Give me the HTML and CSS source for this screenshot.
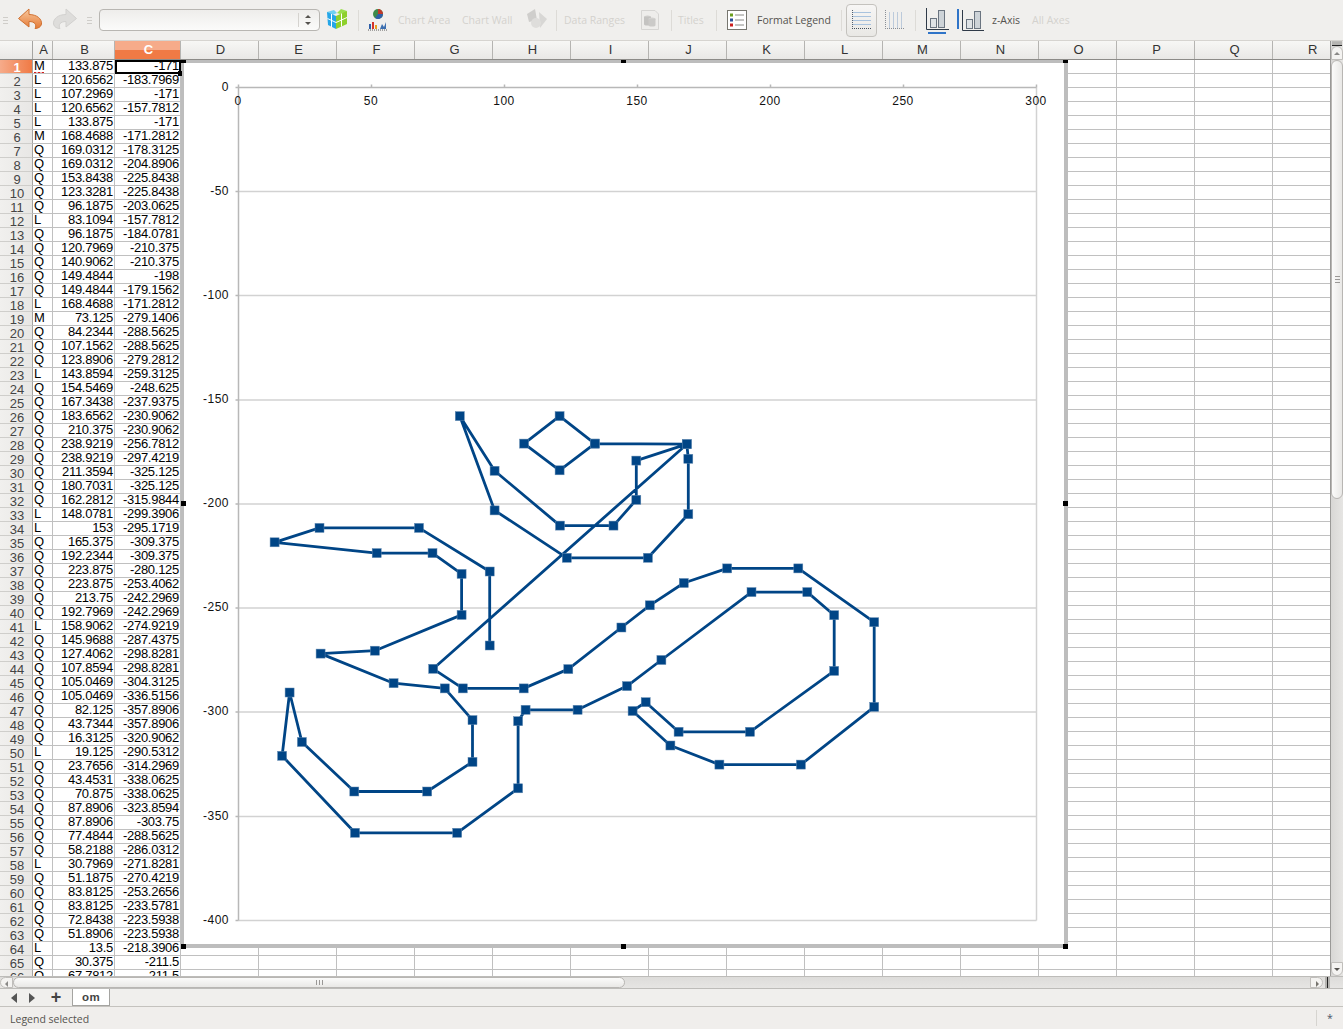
FILE: index.html
```html
<!DOCTYPE html>
<html>
<head>
    <title>om - Calc</title>
    <link rel="stylesheet" href="styles.css">
</head>
<body>
    <div class="toolbar">
        <span class="grip grip-first"></span>
        <svg class="tool-icon undo" width="26" height="24" viewBox="0 0 26 24">
            <defs>
                <linearGradient id="undo-fill" x1="0" y1="0" x2="0" y2="1">
                    <stop offset="0" stop-color="#f8c9a0"/>
                    <stop offset="1" stop-color="#e57a35"/>
                </linearGradient>
            </defs>
            <path d="M1.500 10.500 L12 1 V6.500 C20 6.500 25 11 24.500 16 C24 19 21 20.500 18 20.500 C20 17 18 13.500 12 13.500 V19 Z" fill="url(#undo-fill)" stroke="#d07030"/>
        </svg>
        <svg class="tool-icon redo" width="26" height="24" viewBox="0 0 26 24">
            <path d="M24.500 10.500 L14 1 V6.500 C6 6.500 1 11 1.500 16 C2 19 5 20.500 8 20.500 C6 17 8 13.500 14 13.500 V19 Z" fill="#dedddb" stroke="#d2d1cf"/>
        </svg>
        <span class="grip grip-second"></span>
        <div class="combo"><span class="combo-spin"><i class="up"></i><i class="down"></i></span></div>
        <svg class="tool-icon cube" width="22" height="24" viewBox="0 0 22 24">
            <path d="M1 4 L8 2 L11 5 L4 8 Z" fill="#6fd0f2"/>
            <path d="M11 5 L15 1 L21 3 L17 7 Z" fill="#9adf4e"/>
            <path d="M1 4 L10 8 V21 L2 17 Z" fill="#25a6e8"/>
            <path d="M10 8 L21 3 V16 L10 21 Z" fill="#8ed02c"/>
            <path d="M5.500 6 V19 M1.500 10.500 L10 14.500 L21 9.500 M15.500 5.500 V18.500" stroke="#fff" stroke-width="1" fill="none"/>
        </svg>
        <span class="sep sep-a"></span>
        <svg class="tool-icon chart-type" width="20" height="24" viewBox="0 0 20 24">
            <circle cx="10" cy="6" r="5" fill="#3d8a4a"/>
            <path d="M10 6 V1 A5 5 0 0 1 15 6 Z" fill="#c0392b"/>
            <path d="M10 6 L15 6 A5 5 0 0 1 7 10 Z" fill="#2f5fa8"/>
            <path d="M1 16 h2 v5 h-2 z" fill="#2f5fa8"/>
            <path d="M4 14 h2 v7 h-2 z" fill="#d4332a"/>
            <path d="M7 17 h2 v4 h-2 z" fill="#e8a020"/>
            <path d="M12 21 l2 -5 l2 3 l2 -5 v7 z" fill="#3d6fb0"/>
            <path d="M0 22 h20" stroke="#555" stroke-width="1" stroke-dasharray="1 1"/>
        </svg>
        <span class="label off label-area">Chart Area</span>
        <span class="label off label-wall">Chart Wall</span>
        <svg class="tool-icon wall-3d" width="24" height="24" viewBox="0 0 24 24">
            <path d="M2 6 L10 1 L12 12 L4 14 Z" fill="#cfcecc"/>
            <path d="M14 4 L22 11 L15 20 Z" fill="#d8d7d5"/>
            <circle cx="11" cy="15" r="5" fill="#dedddb"/>
        </svg>
        <span class="sep sep-b"></span>
        <span class="label off label-ranges">Data Ranges</span>
        <svg class="tool-icon ranges" width="20" height="22" viewBox="0 0 20 22">
            <path d="M1.500 1.500 H15 L18.500 5 V20.500 H1.500 Z" fill="#eeedeb" stroke="#d6d5d3"/>
            <ellipse cx="7.500" cy="8" rx="3.500" ry="1.500" fill="#cdccca"/>
            <path d="M4 8 V15 A3.500 1.500 0 0 0 11 15 V8 Z" fill="#c4c3c1"/>
            <ellipse cx="12" cy="10" rx="3.500" ry="1.500" fill="#d2d1cf"/>
            <path d="M8.500 10 V16 A3.500 1.500 0 0 0 15.500 16 V10 Z" fill="#cbcac8"/>
        </svg>
        <span class="sep sep-c"></span>
        <span class="label off label-titles">Titles</span>
        <span class="sep sep-d"></span>
        <svg class="tool-icon legend" width="21" height="21" viewBox="0 0 21 21">
            <rect x="0.500" y="0.500" width="19" height="19" fill="#fff" stroke="#77766f"/>
            <rect x="3" y="3.500" width="3" height="3" fill="#6a9e1f"/>
            <rect x="3" y="8.500" width="3" height="3" fill="#2a4f9a"/>
            <rect x="3" y="13.500" width="3" height="3" fill="#cc1f1f"/>
            <path d="M8 5 H17 M8 10 H17 M8 15 H17" stroke="#8a8a86"/>
        </svg>
        <span class="label label-legend">Format Legend</span>
        <span class="sep sep-e"></span>
        <span class="toggle">
            <svg width="21" height="20" viewBox="0 0 21 20">
                <path d="M1.500 0 V18.500" stroke="#55606e" stroke-dasharray="1 1"/>
                <path d="M2 2.500 H20 M2 6.500 H20 M2 10.500 H20 M2 14.500 H20" stroke="#a9c3de"/>
                <path d="M1 18.500 H21" stroke="#44505e" stroke-dasharray="1 1"/>
            </svg>
        </span>
        <svg class="tool-icon vgrid" width="20" height="20" viewBox="0 0 20 20">
            <path d="M1.500 0 V18.500" stroke="#8a8f96" stroke-dasharray="1 1"/>
            <path d="M5.500 2 V18 M9.500 2 V18 M13.500 2 V18 M17.500 2 V18" stroke="#bccadb"/>
            <path d="M1 18.500 H20" stroke="#8a8f96" stroke-dasharray="1 1"/>
        </svg>
        <span class="sep sep-f"></span>
        <svg class="tool-icon xaxis" width="24" height="27" viewBox="0 0 24 27">
            <path d="M0.500 1 V22.500 H23" stroke="#2f3a48" fill="none"/>
            <rect x="4.500" y="11.500" width="6" height="9" fill="#dfe3e6" stroke="#6a7480"/>
            <rect x="12.500" y="3.500" width="6" height="17" fill="#cdd3d8" stroke="#6a7480"/>
            <path d="M2 26 H20" stroke="#2f74c8" stroke-width="2"/>
        </svg>
        <svg class="tool-icon yaxis" width="27" height="23" viewBox="0 0 27 23">
            <path d="M5.500 1 V21.500 H27" stroke="#2f3a48" fill="none"/>
            <path d="M1 0 V20" stroke="#2f74c8" stroke-width="2"/>
            <rect x="9.500" y="10.500" width="6" height="9" fill="#dfe3e6" stroke="#6a7480"/>
            <rect x="17.500" y="2.500" width="6" height="17" fill="#cdd3d8" stroke="#6a7480"/>
        </svg>
        <span class="label label-z">z-Axis</span>
        <span class="label off label-all">All Axes</span>
    </div>

    <div class="sheet">
        <div class="sheet-main">
            <div class="col-headers">
                <span class="corner"></span>
                <span class="col col-a">A</span>
                <span class="col col-b">B</span>
                <span class="col col-c active">C</span>
                <span class="col">D</span><span class="col">E</span><span class="col">F</span>
                <span class="col">G</span><span class="col">H</span><span class="col">I</span>
                <span class="col">J</span><span class="col">K</span><span class="col">L</span>
                <span class="col">M</span><span class="col">N</span><span class="col">O</span>
                <span class="col">P</span><span class="col">Q</span>
                <span class="col col-last">R</span>
            </div>

            <div class="grid-wrap">
                <table class="cells">
                    <tr><th class="active">1</th><td class="cmd squiggle">M</td><td>133.875</td><td class="cursor">-171</td></tr>
                    <tr><th>2</th><td class="cmd">L</td><td>120.6562</td><td>-183.7969</td></tr>
                    <tr><th>3</th><td class="cmd">L</td><td>107.2969</td><td>-171</td></tr>
                    <tr><th>4</th><td class="cmd">L</td><td>120.6562</td><td>-157.7812</td></tr>
                    <tr><th>5</th><td class="cmd">L</td><td>133.875</td><td>-171</td></tr>
                    <tr><th>6</th><td class="cmd">M</td><td>168.4688</td><td>-171.2812</td></tr>
                    <tr><th>7</th><td class="cmd">Q</td><td>169.0312</td><td>-178.3125</td></tr>
                    <tr><th>8</th><td class="cmd">Q</td><td>169.0312</td><td>-204.8906</td></tr>
                    <tr><th>9</th><td class="cmd">Q</td><td>153.8438</td><td>-225.8438</td></tr>
                    <tr><th>10</th><td class="cmd">Q</td><td>123.3281</td><td>-225.8438</td></tr>
                    <tr><th>11</th><td class="cmd">Q</td><td>96.1875</td><td>-203.0625</td></tr>
                    <tr><th>12</th><td class="cmd">L</td><td>83.1094</td><td>-157.7812</td></tr>
                    <tr><th>13</th><td class="cmd">Q</td><td>96.1875</td><td>-184.0781</td></tr>
                    <tr><th>14</th><td class="cmd">Q</td><td>120.7969</td><td>-210.375</td></tr>
                    <tr><th>15</th><td class="cmd">Q</td><td>140.9062</td><td>-210.375</td></tr>
                    <tr><th>16</th><td class="cmd">Q</td><td>149.4844</td><td>-198</td></tr>
                    <tr><th>17</th><td class="cmd">Q</td><td>149.4844</td><td>-179.1562</td></tr>
                    <tr><th>18</th><td class="cmd">L</td><td>168.4688</td><td>-171.2812</td></tr>
                    <tr><th>19</th><td class="cmd">M</td><td>73.125</td><td>-279.1406</td></tr>
                    <tr><th>20</th><td class="cmd">Q</td><td>84.2344</td><td>-288.5625</td></tr>
                    <tr><th>21</th><td class="cmd">Q</td><td>107.1562</td><td>-288.5625</td></tr>
                    <tr><th>22</th><td class="cmd">Q</td><td>123.8906</td><td>-279.2812</td></tr>
                    <tr><th>23</th><td class="cmd">L</td><td>143.8594</td><td>-259.3125</td></tr>
                    <tr><th>24</th><td class="cmd">Q</td><td>154.5469</td><td>-248.625</td></tr>
                    <tr><th>25</th><td class="cmd">Q</td><td>167.3438</td><td>-237.9375</td></tr>
                    <tr><th>26</th><td class="cmd">Q</td><td>183.6562</td><td>-230.9062</td></tr>
                    <tr><th>27</th><td class="cmd">Q</td><td>210.375</td><td>-230.9062</td></tr>
                    <tr><th>28</th><td class="cmd">Q</td><td>238.9219</td><td>-256.7812</td></tr>
                    <tr><th>29</th><td class="cmd">Q</td><td>238.9219</td><td>-297.4219</td></tr>
                    <tr><th>30</th><td class="cmd">Q</td><td>211.3594</td><td>-325.125</td></tr>
                    <tr><th>31</th><td class="cmd">Q</td><td>180.7031</td><td>-325.125</td></tr>
                    <tr><th>32</th><td class="cmd">Q</td><td>162.2812</td><td>-315.9844</td></tr>
                    <tr><th>33</th><td class="cmd">L</td><td>148.0781</td><td>-299.3906</td></tr>
                    <tr><th>34</th><td class="cmd">L</td><td>153</td><td>-295.1719</td></tr>
                    <tr><th>35</th><td class="cmd">Q</td><td>165.375</td><td>-309.375</td></tr>
                    <tr><th>36</th><td class="cmd">Q</td><td>192.2344</td><td>-309.375</td></tr>
                    <tr><th>37</th><td class="cmd">Q</td><td>223.875</td><td>-280.125</td></tr>
                    <tr><th>38</th><td class="cmd">Q</td><td>223.875</td><td>-253.4062</td></tr>
                    <tr><th>39</th><td class="cmd">Q</td><td>213.75</td><td>-242.2969</td></tr>
                    <tr><th>40</th><td class="cmd">Q</td><td>192.7969</td><td>-242.2969</td></tr>
                    <tr><th>41</th><td class="cmd">L</td><td>158.9062</td><td>-274.9219</td></tr>
                    <tr><th>42</th><td class="cmd">Q</td><td>145.9688</td><td>-287.4375</td></tr>
                    <tr><th>43</th><td class="cmd">Q</td><td>127.4062</td><td>-298.8281</td></tr>
                    <tr><th>44</th><td class="cmd">Q</td><td>107.8594</td><td>-298.8281</td></tr>
                    <tr><th>45</th><td class="cmd">Q</td><td>105.0469</td><td>-304.3125</td></tr>
                    <tr><th>46</th><td class="cmd">Q</td><td>105.0469</td><td>-336.5156</td></tr>
                    <tr><th>47</th><td class="cmd">Q</td><td>82.125</td><td>-357.8906</td></tr>
                    <tr><th>48</th><td class="cmd">Q</td><td>43.7344</td><td>-357.8906</td></tr>
                    <tr><th>49</th><td class="cmd">Q</td><td>16.3125</td><td>-320.9062</td></tr>
                    <tr><th>50</th><td class="cmd">L</td><td>19.125</td><td>-290.5312</td></tr>
                    <tr><th>51</th><td class="cmd">Q</td><td>23.7656</td><td>-314.2969</td></tr>
                    <tr><th>52</th><td class="cmd">Q</td><td>43.4531</td><td>-338.0625</td></tr>
                    <tr><th>53</th><td class="cmd">Q</td><td>70.875</td><td>-338.0625</td></tr>
                    <tr><th>54</th><td class="cmd">Q</td><td>87.8906</td><td>-323.8594</td></tr>
                    <tr><th>55</th><td class="cmd">Q</td><td>87.8906</td><td>-303.75</td></tr>
                    <tr><th>56</th><td class="cmd">Q</td><td>77.4844</td><td>-288.5625</td></tr>
                    <tr><th>57</th><td class="cmd">Q</td><td>58.2188</td><td>-286.0312</td></tr>
                    <tr><th>58</th><td class="cmd">L</td><td>30.7969</td><td>-271.8281</td></tr>
                    <tr><th>59</th><td class="cmd">Q</td><td>51.1875</td><td>-270.4219</td></tr>
                    <tr><th>60</th><td class="cmd">Q</td><td>83.8125</td><td>-253.2656</td></tr>
                    <tr><th>61</th><td class="cmd">Q</td><td>83.8125</td><td>-233.5781</td></tr>
                    <tr><th>62</th><td class="cmd">Q</td><td>72.8438</td><td>-223.5938</td></tr>
                    <tr><th>63</th><td class="cmd">Q</td><td>51.8906</td><td>-223.5938</td></tr>
                    <tr><th>64</th><td class="cmd">L</td><td>13.5</td><td>-218.3906</td></tr>
                    <tr><th>65</th><td class="cmd">Q</td><td>30.375</td><td>-211.5</td></tr>
                    <tr><th>66</th><td class="cmd">Q</td><td>67.7812</td><td>-211.5</td></tr>
                </table>
                <div class="empty-cells"></div>

                <!-- chart object floats over the cells -->
                <div class="chart-frame">
                    <svg class="chart" width="884" height="888" viewBox="184 60 884 888">
                        <defs>
                            <marker id="dot" markerUnits="userSpaceOnUse" markerWidth="11" markerHeight="11" refX="5.500" refY="5.500">
                                <rect x="1" y="1" width="9" height="9" fill="#004586" stroke="#5f87b0" stroke-width="0.500"/>
                            </marker>
                        </defs>
                        <g class="gridlines">
                            <path d="M238 191 H1036 M238 295 H1036 M238 399.500 H1036 M238 503.500 H1036 M238 607.500 H1036 M238 711.500 H1036 M238 816 H1036"/>
                            <path d="M238 920 H1036 M1036 87 V920"/>
                        </g>
                        <g class="axes">
                            <path d="M238 87 H1036 M238 84 V920"/>
                            <path d="M371 84 V87 M504 84 V87 M637 84 V87 M770 84 V87 M903 84 V87 M1036 84 V87"/>
                            <path d="M235 87 H238 M235 191 H238 M235 295 H238 M235 399.500 H238 M235 503.500 H238 M235 607.500 H238 M235 711.500 H238 M235 816 H238 M235 920 H238"/>
                        </g>
                        <g class="x-labels">
                            <text x="238" y="105">0</text>
                            <text x="371" y="105">50</text>
                            <text x="504" y="105">100</text>
                            <text x="637" y="105">150</text>
                            <text x="770" y="105">200</text>
                            <text x="903" y="105">250</text>
                            <text x="1036" y="105">300</text>
                        </g>
                        <g class="y-labels">
                            <text x="229" y="91">0</text>
                            <text x="229" y="195">-50</text>
                            <text x="229" y="299">-100</text>
                            <text x="229" y="403">-150</text>
                            <text x="229" y="507">-200</text>
                            <text x="229" y="611">-250</text>
                            <text x="229" y="715">-300</text>
                            <text x="229" y="820">-350</text>
                            <text x="229" y="924">-400</text>
                        </g>
                        <polyline class="series" points="594.1,443.1 558.9,469.8 523.4,443.1 558.9,415.6 594.1,443.1 686.1,443.7 687.6,458.3 687.6,513.7 647.2,557.3 566.1,557.3 493.9,509.9 459.1,415.6 493.9,470.3 559.3,525.1 612.8,525.1 635.6,499.3 635.6,460.1 686.1,443.7 432.5,668.3 462.1,687.9 523,687.9 567.6,668.6 620.7,627 649.1,604.8 683.1,582.5 726.5,567.9 797.6,567.9 873.5,621.7 873.5,706.4 800.2,764.1 718.7,764.1 669.7,745 631.9,710.5 645,701.7 677.9,731.3 749.3,731.3 833.5,670.4 833.5,614.7 806.6,591.6 750.8,591.6 660.7,659.5 626.3,685.6 576.9,709.3 524.9,709.3 517.4,720.7 517.4,787.8 456.5,832.3 354.3,832.3 281.4,755.3 288.9,692 301.2,741.5 353.6,791 426.5,791 471.8,761.4 471.8,719.6 444.1,687.9 392.9,682.7 319.9,653.1 374.2,650.2 460.9,614.4 460.9,573.4 431.8,552.6 376,552.6 273.9,541.8 318.8,527.4 418.3,527.4 489,571 489,645"/>
                    </svg>
                    <i class="handle h-tl"></i><i class="handle h-tm"></i><i class="handle h-tr"></i>
                    <i class="handle h-ml"></i><i class="handle h-mr"></i>
                    <i class="handle h-bl"></i><i class="handle h-bm"></i><i class="handle h-br"></i>
                </div>
                <i class="cursor-handle"></i>
            </div>
        </div>

        <div class="vscroll">
            <span class="split-v"></span>
            <span class="btn-up"></span>
            <span class="thumb-v"><i></i></span>
            <span class="track-v"></span>
            <span class="btn-down"></span>
        </div>
    </div>

    <div class="hscroll">
        <span class="btn-left"></span>
        <span class="thumb-h"><i></i></span>
        <span class="track-h"></span>
        <span class="btn-right"></span>
        <span class="split-h"></span>
    </div>

    <div class="tabs">
        <span class="nav nav-prev"></span>
        <span class="nav nav-next"></span>
        <span class="nav-add">+</span>
        <span class="tab">om</span>
    </div>

    <div class="status">
        <span class="status-text">Legend selected</span>
        <span class="status-star">*</span>
    </div>
</body>
</html>
```

FILE: styles.css
```css
html, body {
    margin: 0;
    padding: 0;
}

body {
    width: 1343px;
    height: 1029px;
    overflow: hidden;
    background-color: #f0eeec;
    font-family: "Liberation Sans", sans-serif;
    font-size: 13px;
    color: #000;
}

/* toolbar */
.toolbar {
    height: 40px;
    border-bottom: 1px solid #d6d4d0;
    display: flex;
    align-items: center;
    background-color: #f0efed;
    font-family: "Open Sans", sans-serif;
    font-size: 10.5px;
    white-space: nowrap;
}

.tool-icon {
    flex: none;
    display: block;
}

.grip {
    flex: none;
    width: 5px;
    height: 7px;
    background: repeating-linear-gradient(#cfcdc9 0, #cfcdc9 1px, transparent 1px, transparent 3px);
}

.grip-first { margin-left: 3px; }
.undo { margin-left: 9px; }
.redo { margin-left: 9px; }
.grip-second { margin-left: 9px; }

.combo {
    flex: none;
    margin-left: 7px;
    width: 219px;
    height: 20px;
    border: 1px solid #b8b6b2;
    border-radius: 4px;
    background: linear-gradient(#eeedeb, #fbfbfa);
    display: flex;
    justify-content: flex-end;
}

.combo-spin {
    width: 20px;
    position: relative;
    border-left: 1px solid #d5d3cf;
    margin: 3px 0;
}

.combo-spin i {
    position: absolute;
    left: 6px;
    width: 0;
    height: 0;
    border-left: 3px solid transparent;
    border-right: 3px solid transparent;
}

.combo-spin .up { top: 2px; border-bottom: 3px solid #55534f; }
.combo-spin .down { bottom: 2px; border-top: 3px solid #55534f; }

.cube { margin-left: 6px; }

.sep {
    flex: none;
    width: 1px;
    height: 21px;
    background-color: #dddbd7;
}

.sep-a { margin-left: 10px; }
.chart-type { margin-left: 9px; }

.label {
    flex: none;
    color: #55534f;
    padding-top: 1px;
    margin-bottom: 1px;
}

.label.off { color: #d4d2ce; }

.label-area { margin-left: 10px; width: 52px; }
.label-wall { margin-left: 12px; width: 51px; }
.wall-3d { margin-left: 12px; }
.sep-b { margin-left: 7px; }
.label-ranges { margin-left: 7px; width: 62px; }
.ranges { margin-left: 14px; }
.sep-c { margin-left: 11px; }
.label-titles { margin-left: 6px; width: 27px; }
.sep-d { margin-left: 11px; }
.legend { margin-left: 10px; }
.label-legend { margin-left: 9px; width: 72px; }
.sep-e { margin-left: 12px; }

.toggle {
    flex: none;
    margin-left: 4px;
    width: 31px;
    height: 33px;
    box-sizing: border-box;
    border: 1px solid #c4c2be;
    border-radius: 4px;
    background: linear-gradient(#f7f6f5, #e9e8e5);
    display: flex;
    align-items: center;
    justify-content: center;
}

.vgrid { margin-left: 7px; }
.sep-f { margin-left: 11px; }
.xaxis { margin-left: 10px; }
.yaxis { margin-left: 7px; }
.label-z { margin-left: 8px; width: 29px; }
.label-all { margin-left: 11px; }

/* sheet area: headers and cells next to the vertical scrollbar */
.sheet {
    height: 935px;
    display: flex;
}

.sheet-main {
    flex: none;
    width: 1330px;
}

.col-headers {
    height: 18px;
    display: flex;
    background: linear-gradient(#f7f7f5, #e9e8e6);
    border-bottom: 1px solid #8c8b88;
    font-size: 13px;
    color: #333;
}

.corner {
    flex: none;
    width: 32px;
    border-right: 1px solid #a5a4a1;
}

.col {
    flex: none;
    width: 77px;
    border-right: 1px solid #b5b4b1;
    text-align: center;
    text-indent: 2px;
    line-height: 18px;
}

.col-a { width: 19px; }
.col-b { width: 61px; }
.col-c { width: 65px; }

/* R is cut off by the scrollbar, its label still sits in the middle of a full column */
.col-last {
    width: 57px;
    border-right: 0;
    text-align: left;
    text-indent: 35px;
}

.col.active {
    background: linear-gradient(#f6ab8a 50%, #f07a45 50%);
    color: #fff;
    font-weight: bold;
}

/* cells */
.grid-wrap {
    height: 916px;
    overflow: hidden;
    background-color: #fff;
    position: relative;
    display: flex;
}

.cells {
    flex: none;
    width: 181px;
    table-layout: fixed;
    border-collapse: separate;
    border-spacing: 0;
    font-size: 13px;
    letter-spacing: -0.280px;
}

.cells th, .cells td {
    height: 12px;
    padding: 0 1px 1px 1px;
    line-height: 12px;
    border-right: 1px solid #c0c0c0;
    border-bottom: 1px solid #c0c0c0;
    text-align: right;
    font-weight: normal;
    white-space: nowrap;
}

.cells th {
    width: 32px;
    height: 11px;
    padding: 2px 0 0 0;
    font-size: 13px;
    letter-spacing: 0;
    line-height: 11px;
    text-align: center;
    text-indent: 2px;
    color: #444;
    background: linear-gradient(90deg, #f1f0ee, #e8e7e5);
    border-right-color: #a5a4a1;
    border-bottom-color: #cfcecb;
}

.cells th.active {
    background: linear-gradient(90deg, #f6ab8a, #f07a45);
    color: #fff;
    font-weight: bold;
}

.cells td:nth-child(2) { width: 17px; text-align: left; }
.cells td:nth-child(3) { width: 59px; }
.cells td:nth-child(4) { width: 63px; }

.cells .squiggle {
    background: repeating-linear-gradient(90deg, #d02020 0, #d02020 2px, #f3b0b0 2px, #f3b0b0 4px) no-repeat 1px 100% / 10px 1px;
}

.cells .cursor {
    outline: 2px solid #000;
    outline-offset: -2px;
}

.cursor-handle {
    position: absolute;
    left: 178px;
    top: 11px;
    width: 4px;
    height: 5px;
    background-color: #000;
}

.empty-cells {
    flex: 1;
    background-image:
        linear-gradient(90deg, transparent 77px, #c0c0c0 77px),
        linear-gradient(transparent 13px, #c0c0c0 13px);
    background-size: 78px 100%, 100% 14px;
}

/* chart over the cells */
.chart-frame {
    position: absolute;
    left: 181px;
    top: 0;
    width: 880px;
    height: 881px;
    border: 3px solid #bdbdbd;
    border-right-width: 4px;
    border-bottom-width: 4px;
    background-color: #fff;
}

.chart {
    position: absolute;
    left: 0;
    top: -3px;
    display: block;
}

.gridlines path { fill: none; stroke: #d2d2d2; stroke-width: 1.500; }
.axes path { fill: none; stroke: #b8b8b8; stroke-width: 1.500; }
.gridlines, .axes { transform: translate(0.500px, 0.500px); }

.x-labels text, .y-labels text {
    font-family: "Liberation Sans", sans-serif;
    font-size: 12px;
    letter-spacing: 0.500px;
    fill: #111;
}

.x-labels text { text-anchor: middle; }
.y-labels text { text-anchor: end; }

.series {
    fill: none;
    stroke: #004586;
    stroke-width: 2.800;
    stroke-linejoin: round;
    marker-start: url(#dot);
    marker-mid: url(#dot);
    marker-end: url(#dot);
    transform: translate(0.700px, 0.500px);
}

.handle {
    position: absolute;
    width: 5px;
    height: 5px;
    background-color: #000;
}

.h-tl { left: -3px; top: -3px; height: 3px; }
.h-tm { left: 437px; top: -3px; height: 3px; }
.h-tr { left: 879px; top: -3px; height: 3px; }
.h-ml { left: -3px; top: 438px; }
.h-mr { left: 879px; top: 438px; }
.h-bl { left: -3px; top: 881px; }
.h-bm { left: 437px; top: 881px; }
.h-br { left: 879px; top: 881px; }

/* scrollbars */
.vscroll {
    flex: none;
    width: 13px;
    display: flex;
    flex-direction: column;
    background: linear-gradient(90deg, #d8d7d5, #e6e5e3);
    box-sizing: border-box;
    border-left: 1px solid #9a9997;
}

.split-v {
    flex: none;
    height: 3px;
    margin: 0 1px;
    border-top: 1px solid #bdbcb9;
    border-bottom: 1px solid #222;
    background-color: #b5b4b1;
}

.btn-up, .btn-down, .btn-left, .btn-right {
    flex: none;
    position: relative;
    background-color: #f4f3f1;
    border: 1px solid #c0bebb;
    box-sizing: border-box;
}

.btn-up, .btn-down { height: 14px; }
.btn-left, .btn-right { width: 13px; }

.btn-up { border-radius: 6px 6px 0 0; }
.btn-down { border-radius: 0 0 6px 6px; }
.btn-left { border-radius: 6px 0 0 6px; }
.btn-right { border-radius: 0 6px 6px 0; }

.btn-up::after, .btn-down::after, .btn-left::after, .btn-right::after {
    content: "";
    position: absolute;
    width: 0;
    height: 0;
    border: 3px solid transparent;
}

.btn-up::after { left: 2px; top: 2px; border-bottom-color: #8a8987; }
.btn-down::after { left: 2px; top: 5px; border-top-color: #55534f; }
.btn-left::after { left: 1px; top: 3px; border-right-color: #8a8987; }
.btn-right::after { left: 5px; top: 3px; border-left-color: #77756f; }

.thumb-v {
    flex: none;
    height: 439px;
    box-sizing: border-box;
    border: 1px solid #b8b6b3;
    border-radius: 6px;
    background: linear-gradient(90deg, #fbfbfa, #e9e8e6);
    display: flex;
    align-items: center;
    justify-content: center;
}

.thumb-v i {
    width: 5px;
    height: 7px;
    background: repeating-linear-gradient(#9a9896 0, #9a9896 1px, transparent 1px, transparent 3px);
}

.track-v { flex: 1; }

.hscroll {
    height: 13px;
    box-sizing: border-box;
    display: flex;
    background: linear-gradient(#dddcda, #e6e5e3);
    border-top: 1px solid #bdbcb9;
    border-bottom: 1px solid #bdbcb9;
}

.thumb-h {
    flex: none;
    width: 612px;
    box-sizing: border-box;
    border: 1px solid #b8b6b3;
    border-radius: 6px;
    background: linear-gradient(#fbfbfa, #e9e8e6);
    display: flex;
    align-items: center;
    justify-content: center;
}

.thumb-h i {
    width: 7px;
    height: 5px;
    background: repeating-linear-gradient(90deg, #9a9896 0, #9a9896 1px, transparent 1px, transparent 3px);
}

.track-h { flex: 1; }

.split-h {
    flex: none;
    width: 5px;
    margin-left: 2px;
    margin-right: 13px;
    border-left: 2px solid #b5b4b1;
    border-right: 2px solid #b5b4b1;
    box-sizing: border-box;
    background-color: #222;
}

/* sheet tabs */
.tabs {
    height: 18px;
    box-sizing: border-box;
    display: flex;
    align-items: stretch;
    border-bottom: 1px solid #c4c2be;
    background-color: #f0efed;
}

.nav {
    flex: none;
    width: 0;
    height: 0;
    align-self: center;
    border-top: 5px solid transparent;
    border-bottom: 5px solid transparent;
}

.nav-prev { margin-left: 11px; border-right: 6px solid #555; }
.nav-next { margin-left: 12px; border-left: 6px solid #555; }

.nav-add {
    flex: none;
    width: 12px;
    text-align: center;
    margin-left: 15px;
    font-weight: bold;
    font-size: 18px;
    line-height: 16px;
    color: #444;
}

.tab {
    flex: none;
    margin-left: 10px;
    width: 36px;
    text-align: center;
    font-size: 11.5px;
    font-weight: bold;
    letter-spacing: 0.500px;
    line-height: 16px;
    color: #444;
    background-color: #fff;
    border-left: 1px solid #a5a4a1;
    border-right: 1px solid #a5a4a1;
    border-bottom: 1px solid #a5a4a1;
}

/* status bar */
.status {
    height: 22px;
    display: flex;
    align-items: center;
    font-family: "Open Sans", sans-serif;
    font-size: 10.5px;
    color: #55534f;
}

.status-text { margin-left: 10px; padding-top: 2px; flex: 1; }

.status-star {
    flex: none;
    width: 26px;
    border-left: 1px solid #d6d4d0;
    text-align: center;
    line-height: 16px;
    color: #4a5568;
}
```
